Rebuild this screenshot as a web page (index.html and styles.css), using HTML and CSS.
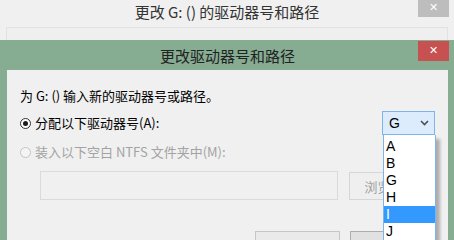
FILE: index.html
```html
<!DOCTYPE html>
<html lang="zh-CN">
<head>
<meta charset="utf-8">
<link rel="stylesheet" href="styles.css">
</head>
<body>
<div class="screen">
  <div class="back">
    <div class="back-titlebar">
      <span class="back-title">更改 G: () 的驱动器号和路径</span>
      <span class="close close-gray">✕</span>
    </div>
    <div class="back-panel"></div>
  </div>
  <div class="front">
    <div class="front-titlebar">
      <span class="front-title">更改驱动器号和路径</span>
      <span class="close close-red">✕</span>
    </div>
    <div class="content">
      <div class="line">为 G: () 输入新的驱动器号或路径。</div>
      <div class="row-assign">
        <span class="radio checked"></span>
        <span class="label">分配以下驱动器号(A):</span>
        <div class="combo"><span class="combo-val">G</span><svg class="chev" width="9" height="6" viewBox="0 0 9 6"><path d="M1 1 L4.5 4.5 L8 1" fill="none" stroke="#505050" stroke-width="1.6"/></svg></div>
      </div>
      <div class="row-mount">
        <span class="radio disabled"></span>
        <span class="label dim">装入以下空白 NTFS 文件夹中(M):</span>
      </div>
      <div class="row-path">
        <div class="pathbox"></div>
        <div class="btn browse">浏览(B)...</div>
      </div>
      <div class="row-buttons">
        <div class="btn ok">确定</div>
        <div class="btn cancel">取消</div>
      </div>
    </div>
    <ul class="droplist">
      <li>A</li>
      <li>B</li>
      <li>G</li>
      <li>H</li>
      <li class="sel">I</li>
      <li>J</li>
      <li>K</li>
    </ul>
  </div>
</div>
</body>
</html>
```

FILE: styles.css
```css
html, body {
  margin: 0;
  padding: 0;
}
body {
  width: 454px;
  height: 240px;
  overflow: hidden;
  background: #f0f0f0;
  font-family: "Noto Sans CJK SC", "Noto Sans", sans-serif;
  font-size: 13px;
  color: #000;
}
.screen {
  width: 454px;
  height: 240px;
  overflow: hidden;
}
.back {
  height: 40px;
  background: #f0f0f0;
}
.back-titlebar {
  height: 27px;
  display: flex;
  align-items: flex-start;
  justify-content: center;
  position: relative;
}
.back-title {
  font-size: 15px;
  line-height: 24px;
  color: #333;
}
.close {
  position: absolute;
  width: 31px;
  color: #fff;
  font-family: "DejaVu Sans", sans-serif;
  font-size: 11px;
  text-align: center;
}
.close-gray {
  right: 5px;
  top: 0;
  height: 17px;
  line-height: 15px;
  background: #bdbdbd;
}
.back-panel {
  margin: 0 6px 0 6px;
  height: 13px;
  border: 1px solid #e2e2e2;
  border-bottom: none;
  background: #efefef;
}
.front {
  position: relative;
  background: #86ac92;
  padding: 0 6px 0 7px;
  height: 200px;
}
.front-titlebar {
  height: 30px;
  display: flex;
  justify-content: center;
  position: relative;
}
.front-title {
  font-size: 15px;
  line-height: 32px;
  color: #222;
}
.close-red {
  right: -1px;
  top: 1px;
  height: 20px;
  line-height: 20px;
  background: #c75050;
}
.content {
  background: #f0f0f0;
  height: 170px;
  padding: 18px 13px 0 13px;
  box-sizing: border-box;
}
.line {
  line-height: 16px;
}
.row-assign {
  display: flex;
  align-items: center;
  height: 24px;
  margin-top: 7px;
}
.radio {
  width: 11px;
  height: 11px;
  border-radius: 50%;
  box-sizing: border-box;
  border: 1px solid #333;
  background: #fff;
  position: relative;
  flex: none;
}
.radio.checked::after {
  content: "";
  position: absolute;
  left: 2px;
  top: 2px;
  width: 5px;
  height: 5px;
  border-radius: 50%;
  background: #1a1a1a;
}
.radio.disabled {
  border-color: #c4c4c4;
  background: #f4f4f4;
}
.label {
  margin-left: 4px;
  line-height: 16px;
}
.dim {
  color: #a3a3a3;
}
.combo {
  margin-left: auto;
  width: 53px;
  height: 24px;
  box-sizing: border-box;
  border: 1px solid #7eb4ea;
  background: #dcecfc;
  display: flex;
  align-items: center;
  justify-content: space-between;
  padding: 0 5px 0 6px;
  font-family: "Liberation Sans", "DejaVu Sans", sans-serif;
  font-size: 14px;
}
.combo-val {
  line-height: 16px;
}
.row-mount {
  display: flex;
  align-items: center;
  height: 16px;
  margin-top: 9px;
}
.row-path {
  display: flex;
  margin-top: 11px;
  margin-left: 20px;
  gap: 11px;
}
.pathbox {
  width: 298px;
  height: 29px;
  box-sizing: border-box;
  border: 1px solid #dadada;
  background: #f0f0f0;
}
.btn {
  height: 28px;
  box-sizing: border-box;
  border: 1px solid #d6d6d6;
  background: #efefef;
  color: #a0a0a0;
  display: flex;
  align-items: center;
  justify-content: center;
  width: 85px;
}
.browse {
  margin-top: 1px;
}
.row-buttons {
  display: flex;
  gap: 10px;
  margin-top: 31px;
  margin-left: 235px;
}
.ok, .cancel {
  color: #000;
  border-color: #adadad;
  background: #e1e1e1;
}
.ok {
  border: 1px solid #c6c6c6;
  background: #eaeaea;
}
.droplist {
  position: absolute;
  left: 383px;
  top: 95px;
  width: 53px;
  margin: 0;
  padding: 3px 0 0 0;
  list-style: none;
  box-sizing: border-box;
  border: 1px solid #7eb4ea;
  border-top: none;
  background: #fff;
  box-shadow: 4px 4px 3px rgba(0, 0, 0, 0.28);
  font-family: "Liberation Sans", "DejaVu Sans", sans-serif;
  font-size: 14px;
}
.droplist li {
  height: 17px;
  line-height: 17px;
  padding-left: 2px;
}
.droplist li.sel {
  background: #3399ff;
  color: #fff;
}
```
